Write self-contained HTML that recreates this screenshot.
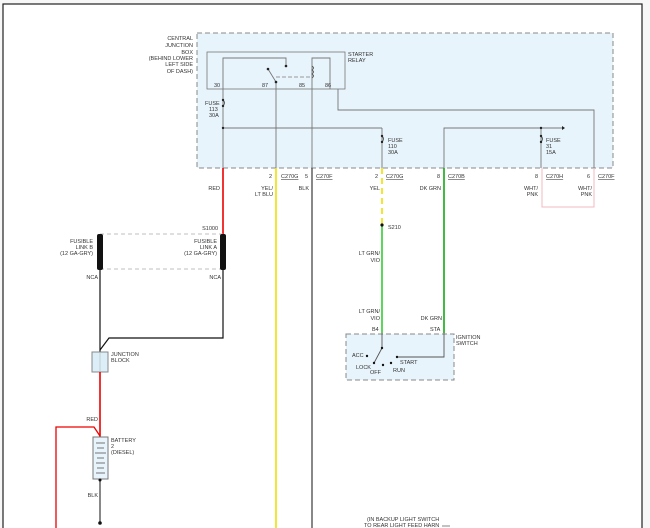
<!DOCTYPE html>
<html><head><style>
html,body{margin:0;padding:0;background:#f7f7f7;}
svg{display:block;}
text{font-family:"Liberation Sans",sans-serif;font-size:5.5px;fill:#333;}
.u{text-decoration:underline;}
</style></head><body>
<svg width="650" height="528" viewBox="0 0 650 528" xmlns="http://www.w3.org/2000/svg">
<rect x="3" y="4" width="639" height="530" fill="#fff" stroke="#222" stroke-width="1.2"/>
<!-- central junction box -->
<rect x="197" y="33" width="416" height="135" fill="#e8f4fb" stroke="#888" stroke-dasharray="5,3"/>
<text x="193" y="40" text-anchor="end">CENTRAL</text>
<text x="193" y="47" text-anchor="end">JUNCTION</text>
<text x="193" y="54" text-anchor="end">BOX</text>
<text x="193" y="60" text-anchor="end">(BEHIND LOWER</text>
<text x="193" y="66" text-anchor="end">LEFT SIDE</text>
<text x="193" y="73" text-anchor="end">OF DASH)</text>
<!-- relay -->
<rect x="207" y="52" width="138" height="37" fill="none" stroke="#777" stroke-width="0.8"/>
<text x="348" y="56">STARTER</text><text x="348" y="62">RELAY</text>
<g stroke="#777" stroke-width="0.9" fill="none">
<polyline points="223,89 223,58 286,58 286,66"/>
<polyline points="312,89 312,58 330,58 330,89"/>
<line x1="276" y1="82" x2="268" y2="69"/>
<line x1="276" y1="82" x2="276" y2="89"/>
<line x1="276" y1="89" x2="276" y2="168"/>
<line x1="312" y1="89" x2="312" y2="168"/>
<line x1="223" y1="89" x2="223" y2="168"/>
<polyline points="338,89 338,110 594,110 594,168"/>
<line x1="223" y1="128" x2="382" y2="128"/>
<line x1="382" y1="128" x2="382" y2="168"/>
<polyline points="444,168 444,128 562,128"/>
<line x1="541" y1="128" x2="541" y2="168"/>
<line x1="276" y1="77" x2="310" y2="77" stroke-dasharray="4,2" stroke="#999"/>
<path d="M312,66 q3,2 0,4 q3,2 0,4 q3,2 0,4" stroke="#555"/>
<path d="M223,100 q3,3 0,6" stroke="#555"/>
<path d="M382,136 q3,3 0,6" stroke="#555"/>
<path d="M541,136 q3,3 0,6" stroke="#555"/>
</g>
<g fill="#222">
<circle cx="268" cy="69" r="1.3"/><circle cx="286" cy="66" r="1.3"/><circle cx="276" cy="82" r="1.3"/>
<circle cx="223" cy="128" r="1.2"/><circle cx="223" cy="100" r="1.2"/><circle cx="223" cy="106" r="1.2"/>
<circle cx="382" cy="136" r="1.2"/><circle cx="382" cy="142" r="1.2"/>
<circle cx="541" cy="136" r="1.2"/><circle cx="541" cy="142" r="1.2"/><circle cx="541" cy="128" r="1.2"/>
<path d="M562,126 l3,2 l-3,2z"/>
</g>
<text x="214" y="87">30</text><text x="262" y="87">87</text><text x="299" y="87">85</text><text x="325" y="87">86</text>
<text x="205" y="105">FUSE</text><text x="209" y="111">113</text><text x="209" y="117">30A</text>
<text x="388" y="142">FUSE</text><text x="388" y="148">110</text><text x="388" y="154">30A</text>
<text x="546" y="142">FUSE</text><text x="546" y="148">31</text><text x="546" y="154">15A</text>
<!-- connector labels -->
<text x="272" y="178" text-anchor="end">2</text><text x="281" y="178" class="u">C270G</text>
<text x="308" y="178" text-anchor="end">5</text><text x="316" y="178" class="u">C270F</text>
<text x="378" y="178" text-anchor="end">2</text><text x="386" y="178" class="u">C270G</text>
<text x="440" y="178" text-anchor="end">8</text><text x="448" y="178" class="u">C270B</text>
<text x="538" y="178" text-anchor="end">8</text><text x="546" y="178" class="u">C270H</text>
<text x="590" y="178" text-anchor="end">6</text><text x="598" y="178" class="u">C270F</text>
<text x="220" y="190" text-anchor="end">RED</text>
<text x="273" y="190" text-anchor="end">YEL/</text><text x="273" y="196" text-anchor="end">LT BLU</text>
<text x="309" y="190" text-anchor="end">BLK</text>
<text x="380" y="190" text-anchor="end">YEL</text>
<text x="441" y="190" text-anchor="end">DK GRN</text>
<text x="538" y="190" text-anchor="end">WHT/</text><text x="538" y="196" text-anchor="end">PNK</text>
<text x="592" y="190" text-anchor="end">WHT/</text><text x="592" y="196" text-anchor="end">PNK</text>
<!-- wires -->
<polyline points="542,168 542,207 594,207 594,168" fill="none" stroke="#f0b8c0" stroke-width="1"/>
<line x1="223" y1="168" x2="223" y2="234" stroke="#e00" stroke-width="1.6"/>
<line x1="276" y1="168" x2="276" y2="528" stroke="#f0e000" stroke-width="1.6"/>
<line x1="312" y1="168" x2="312" y2="528" stroke="#555" stroke-width="1.4"/>
<line x1="382" y1="168" x2="382" y2="225" stroke="#f0e000" stroke-width="1.6" stroke-dasharray="6,4"/>
<line x1="382" y1="225" x2="382" y2="333" stroke="#3c3" stroke-width="1.6"/>
<line x1="444" y1="168" x2="444" y2="333" stroke="#1a1" stroke-width="1.6"/>
<circle cx="382" cy="225" r="1.6" fill="#111"/>
<text x="388" y="229">S210</text>
<text x="380" y="255" text-anchor="end">LT GRN/</text><text x="380" y="262" text-anchor="end">VIO</text>
<text x="380" y="313" text-anchor="end">LT GRN/</text><text x="380" y="320" text-anchor="end">VIO</text>
<text x="442" y="320" text-anchor="end">DK GRN</text>
<!-- ignition switch -->
<rect x="346" y="334" width="108" height="46" fill="#e8f4fb" stroke="#888" stroke-dasharray="5,3"/>
<text x="372" y="331">B4</text><text x="430" y="331">STA</text>
<text x="456" y="339">IGNITION</text><text x="456" y="345">SWITCH</text>
<g stroke="#555" stroke-width="0.9" fill="none">
<polyline points="382,333 382,348 374,363"/>
<polyline points="397,357 444,357 444,333"/>
</g>
<g fill="#111"><circle cx="382" cy="348" r="1.2"/><circle cx="374" cy="363" r="1.2"/><circle cx="367" cy="356" r="1.2"/><circle cx="383" cy="365" r="1.2"/><circle cx="391" cy="363" r="1.2"/><circle cx="397" cy="357" r="1.2"/></g>
<text x="352" y="357">ACC</text><text x="356" y="369">LOCK</text><text x="370" y="374">OFF</text><text x="393" y="372">RUN</text><text x="400" y="364">START</text>
<!-- fusible links -->
<line x1="100" y1="234" x2="223" y2="234" stroke="#aaa" stroke-dasharray="4,3" stroke-width="0.8"/>
<line x1="100" y1="269" x2="223" y2="269" stroke="#aaa" stroke-dasharray="4,3" stroke-width="0.8"/>
<rect x="97" y="234" width="6" height="36" rx="2" fill="#111"/>
<rect x="220" y="234" width="6" height="36" rx="2" fill="#111"/>
<text x="218" y="230" text-anchor="end">S1000</text>
<text x="93" y="243" text-anchor="end">FUSIBLE</text><text x="93" y="249" text-anchor="end">LINK B</text><text x="93" y="255" text-anchor="end">(12 GA-GRY)</text>
<text x="217" y="243" text-anchor="end">FUSIBLE</text><text x="217" y="249" text-anchor="end">LINK A</text><text x="217" y="255" text-anchor="end">(12 GA-GRY)</text>
<text x="98" y="279" text-anchor="end">NCA</text><text x="221" y="279" text-anchor="end">NCA</text>
<polyline points="223,270 223,338 109,338 100,350" fill="none" stroke="#111" stroke-width="1.2"/>
<line x1="100" y1="270" x2="100" y2="352" stroke="#111" stroke-width="1.2"/>
<rect x="92" y="352" width="16" height="20" fill="#dceef8" stroke="#888"/>
<line x1="100" y1="352" x2="100" y2="372" stroke="#aaa" stroke-width="0.5"/>
<text x="111" y="356">JUNCTION</text><text x="111" y="362">BLOCK</text>
<line x1="100" y1="372" x2="100" y2="437" stroke="#e00" stroke-width="1.6"/>
<polyline points="56,528 56,427 94,427 100,436" fill="none" stroke="#e00" stroke-width="1.3"/>
<text x="98" y="421" text-anchor="end">RED</text>
<rect x="93" y="437" width="15" height="42" fill="#e8f4fb" stroke="#777"/>
<g stroke="#555" stroke-width="0.8"><line x1="96" y1="443" x2="105" y2="443"/><line x1="97" y1="448" x2="104" y2="448"/><line x1="95" y1="453" x2="106" y2="453"/><line x1="97" y1="458" x2="104" y2="458"/><line x1="96" y1="463" x2="105" y2="463"/><line x1="97" y1="468" x2="104" y2="468"/><line x1="96" y1="473" x2="105" y2="473"/></g>
<text x="111" y="442">BATTERY</text><text x="111" y="448">2</text><text x="111" y="454">(DIESEL)</text>
<line x1="100" y1="479" x2="100" y2="522" stroke="#555" stroke-width="1.4"/>
<circle cx="100" cy="480" r="1.5" fill="#111"/><circle cx="100" cy="523" r="1.8" fill="#111"/>
<text x="98" y="497" text-anchor="end">BLK</text>
<text x="367" y="521">(IN BACKUP LIGHT SWITCH</text>
<text x="364" y="527">TO REAR LIGHT FEED HARN</text>
<line x1="442" y1="526" x2="450" y2="526" stroke="#333" stroke-width="0.6"/>
</svg>
</body></html>
